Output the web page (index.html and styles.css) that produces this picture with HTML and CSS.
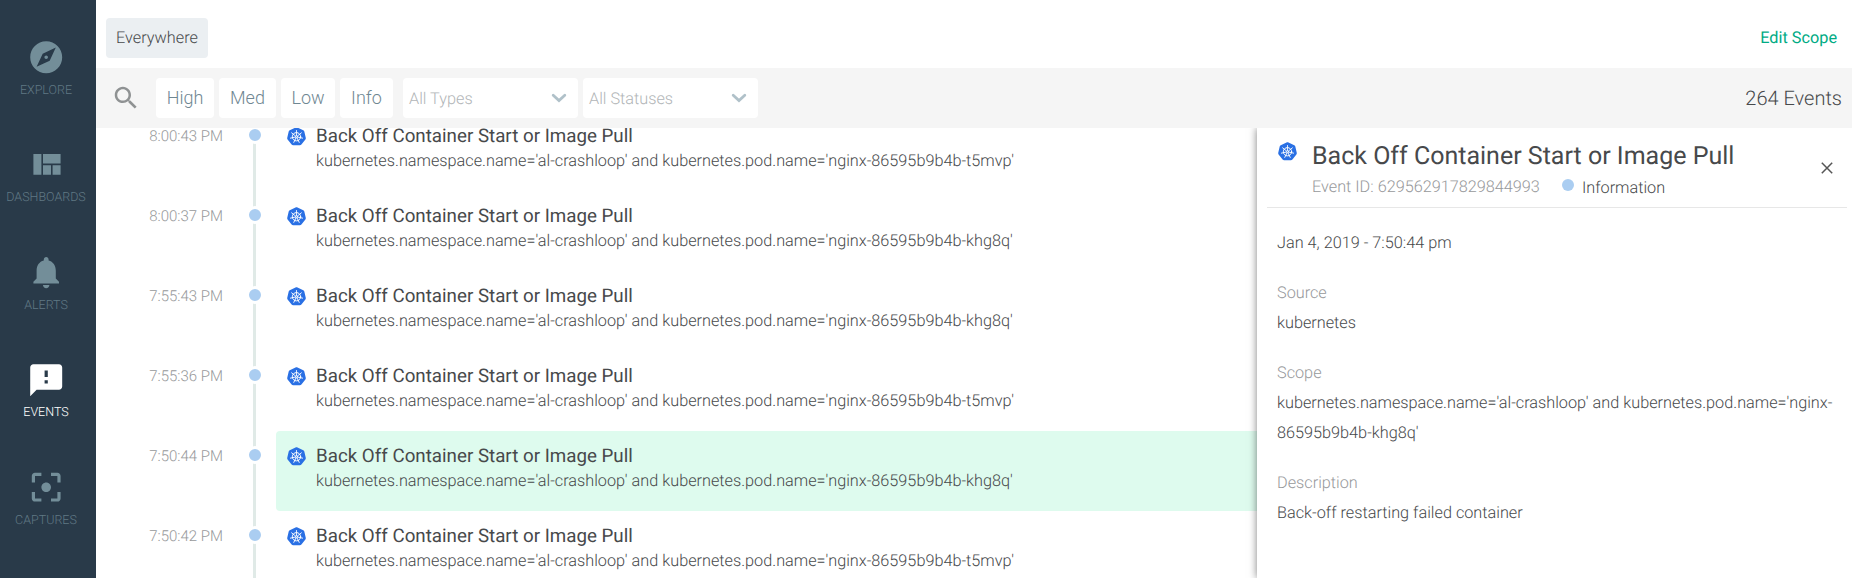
FILE: index.html
```html
<!DOCTYPE html>
<html lang="en">
<head>
<meta charset="utf-8">
<title>Events</title>
<link rel="stylesheet" href="styles.css">
</head>
<body>
<svg class="defs" width="0" height="0">
  <symbol id="k8s" viewBox="0 0 38 38">
    <path fill="#2a70e4" d="M19 .7c.8 0 1.4.1 2 .4l11.500 5.500c1.100.5 1.800 1.500 2.100 2.600l2.900 12.400c.3 1.200 0 2.400-.7 3.300l-8 10c-.8.9-1.900 1.500-3.100 1.500H12.300c-1.200 0-2.300-.6-3.100-1.500l-8-10c-.7-.9-1-2.100-.7-3.300L3.400 9.200c.3-1.100 1-2.100 2.100-2.600L17 1.100c.6-.3 1.200-.4 2-.4z"/>
    <g fill="none" stroke="#fff" stroke-linecap="round">
      <circle cx="19" cy="19.500" r="8.300" stroke-width="2"/>
      <g stroke-width="1.700">
        <path d="M19 17V7"/>
        <path d="M19 17V7" transform="rotate(51.430 19 19.500)"/>
        <path d="M19 17V7" transform="rotate(102.860 19 19.500)"/>
        <path d="M19 17V7" transform="rotate(154.290 19 19.500)"/>
        <path d="M19 17V7" transform="rotate(205.710 19 19.500)"/>
        <path d="M19 17V7" transform="rotate(257.140 19 19.500)"/>
        <path d="M19 17V7" transform="rotate(308.570 19 19.500)"/>
      </g>
      <circle cx="19" cy="19.500" r="2" stroke-width="1.500"/>
    </g>
  </symbol>
  <symbol id="chevron" viewBox="0 0 16 10"><path d="M2.200 2.200 8 7.500l5.800-5.300" fill="none" stroke="#b0c1c9" stroke-width="2.800" stroke-linecap="round"/></symbol>
</svg>
<div class="app">
  <nav class="sidebar">
    <a class="nav-item"><svg viewBox="0 0 24 24"><path d="M12 10.900c-.61 0-1.100.49-1.100 1.100s.49 1.100 1.100 1.100c.61 0 1.100-.49 1.100-1.100s-.49-1.100-1.100-1.100zM12 2C6.480 2 2 6.480 2 12s4.480 10 10 10 10-4.480 10-10S17.520 2 12 2zm2.190 12.190L6 18l3.810-8.190L18 6l-3.810 8.190z"/></svg><span>EXPLORE</span></a>
    <a class="nav-item"><svg viewBox="0 0 24 24"><path d="M10 18h5v-6h-5v6zm-6 0h5V5H4v13zm12 0h5v-6h-5v6zM10 5v6h11V5H10z"/></svg><span>DASHBOARDS</span></a>
    <a class="nav-item"><svg viewBox="0 0 24 24"><path d="M12 22c1.100 0 2-.9 2-2h-4c0 1.100.89 2 2 2zm6-6v-5c0-3.070-1.640-5.640-4.500-6.320V4c0-.83-.67-1.500-1.500-1.500s-1.500.67-1.500 1.500v.68C7.630 5.360 6 7.920 6 11v5l-2 2v1h16v-1l-2-2z"/></svg><span>ALERTS</span></a>
    <a class="nav-item active"><svg viewBox="0 0 24 24"><path d="M20 2H4c-1.100 0-1.990.9-1.990 2L2 22l4-4h14c1.100 0 2-.9 2-2V4c0-1.100-.9-2-2-2zm-7 12h-2v-2h2v2zm0-4h-2V6h2v4z"/></svg><span>EVENTS</span></a>
    <a class="nav-item"><svg viewBox="0 0 24 24"><path d="M12 9c-1.660 0-3 1.340-3 3s1.340 3 3 3 3-1.340 3-3-1.340-3-3-3zm-7 6H3v4c0 1.100.9 2 2 2h4v-2H5v-4zM5 5h4V3H5c-1.100 0-2 .9-2 2v4h2V5zm14-2h-4v2h4v4h2V5c0-1.100-.9-2-2-2zm0 16h-4v2h4c1.100 0 2-.9 2-2v-4h-2v4z"/></svg><span>CAPTURES</span></a>
  </nav>
  <div class="main">
    <header class="scope-bar">
      <span class="scope-chip">Everywhere</span>
      <a class="edit-scope">Edit Scope</a>
    </header>
    <div class="filter-bar">
      <svg class="search" viewBox="0 0 24 24"><path d="M15.500 14h-.79l-.28-.27C15.410 12.590 16 11.110 16 9.500 16 5.910 13.090 3 9.500 3S3 5.910 3 9.500 5.910 16 9.500 16c1.610 0 3.090-.59 4.230-1.570l.27.28v.79l5 4.990L20.490 19l-4.990-5zm-6 0C7.010 14 5 11.990 5 9.500S7.010 5 9.500 5 14 7.010 14 9.500 11.990 14 9.500 14z"/></svg>
      <div class="severities">
        <button class="w-high">High</button><button class="w-med">Med</button><button class="w-low">Low</button><button class="w-info">Info</button>
      </div>
      <div class="select"><span>All Types</span><svg><use href="#chevron"/></svg></div>
      <div class="select"><span>All Statuses</span><svg><use href="#chevron"/></svg></div>
      <div class="count">264 Events</div>
    </div>
    <div class="content">
      <div class="events">
        <div class="event"><time>8:00:43 PM</time><div class="track"><i></i></div><div class="card"><svg class="k8s"><use href="#k8s"/></svg><div><h3>Back Off Container Start or Image Pull</h3><p>kubernetes.namespace.name='al-crashloop' and kubernetes.pod.name='nginx-86595b9b4b-t5mvp'</p></div></div></div>
        <div class="event"><time>8:00:37 PM</time><div class="track"><i></i></div><div class="card"><svg class="k8s"><use href="#k8s"/></svg><div><h3>Back Off Container Start or Image Pull</h3><p>kubernetes.namespace.name='al-crashloop' and kubernetes.pod.name='nginx-86595b9b4b-khg8q'</p></div></div></div>
        <div class="event"><time>7:55:43 PM</time><div class="track"><i></i></div><div class="card"><svg class="k8s"><use href="#k8s"/></svg><div><h3>Back Off Container Start or Image Pull</h3><p>kubernetes.namespace.name='al-crashloop' and kubernetes.pod.name='nginx-86595b9b4b-khg8q'</p></div></div></div>
        <div class="event"><time>7:55:36 PM</time><div class="track"><i></i></div><div class="card"><svg class="k8s"><use href="#k8s"/></svg><div><h3>Back Off Container Start or Image Pull</h3><p>kubernetes.namespace.name='al-crashloop' and kubernetes.pod.name='nginx-86595b9b4b-t5mvp'</p></div></div></div>
        <div class="event selected"><time>7:50:44 PM</time><div class="track"><i></i></div><div class="card"><svg class="k8s"><use href="#k8s"/></svg><div><h3>Back Off Container Start or Image Pull</h3><p>kubernetes.namespace.name='al-crashloop' and kubernetes.pod.name='nginx-86595b9b4b-khg8q'</p></div></div></div>
        <div class="event"><time>7:50:42 PM</time><div class="track"><i></i></div><div class="card"><svg class="k8s"><use href="#k8s"/></svg><div><h3>Back Off Container Start or Image Pull</h3><p>kubernetes.namespace.name='al-crashloop' and kubernetes.pod.name='nginx-86595b9b4b-t5mvp'</p></div></div></div>
      </div>
      <aside class="detail">
        <div class="detail-head">
          <svg class="k8s"><use href="#k8s"/></svg>
          <div class="detail-title">
            <h2>Back Off Container Start or Image Pull</h2>
            <div class="meta"><span class="event-id">Event ID: 629562917829844993</span><i></i><span class="level">Information</span></div>
          </div>
          <svg class="close" viewBox="0 0 12 12"><path d="M.8.8l10.400 10.400M11.200.8.8 11.200"/></svg>
        </div>
        <div class="detail-body">
          <p>Jan 4, 2019 - 7:50:44 pm</p>
          <dl><dt>Source</dt><dd>kubernetes</dd></dl>
          <dl><dt>Scope</dt><dd>kubernetes.namespace.name='al-crashloop' and kubernetes.pod.name='nginx-86595b9b4b-khg8q'</dd></dl>
          <dl><dt>Description</dt><dd>Back-off restarting failed container</dd></dl>
        </div>
      </aside>
    </div>
  </div>
</div>
</body>
</html>
```
FILE: styles.css
```css
* { box-sizing: border-box; margin: 0; padding: 0; }
body { font-family: Roboto, "Open Sans", sans-serif; font-weight: 300; font-size: 16.25px; text-rendering: geometricPrecision; color: #47494b; background: #fff; overflow: hidden; }
.defs { display: block; }
.app { display: flex; height: 578px; }

.sidebar { width: 96px; flex: none; background: #293a49; padding: 38px 4px 0 0; display: flex; flex-direction: column; }
.nav-item { height: 107.5px; flex: none; display: flex; flex-direction: column; align-items: center; gap: 6.5px; color: #607884; font-size: 12.5px; line-height: 16px; }
.nav-item svg { width: 38.4px; height: 38.4px; flex: none; fill: #738e99; }
.nav-item.active { color: #fff; }
.nav-item.active svg { fill: #fff; }

.main { flex: 1; min-width: 0; display: flex; flex-direction: column; }
.scope-bar { height: 68px; flex: none; display: flex; align-items: center; justify-content: space-between; padding: 8px 14px 0 10px; }
.scope-chip { height: 40px; width: 102px; text-align: center; line-height: 39px; background: #ebeff2; border-radius: 4px; }
.edit-scope { color: #00ab84; font-weight: 400; line-height: 38px; padding: 0 1px 1px 0; }

.filter-bar { height: 60px; flex: none; background: #f5f5f5; display: flex; align-items: center; padding: 0 10px 0 15px; }
.search { width: 30px; height: 30px; fill: #8f9293; margin-right: 15px; }
.severities { display: flex; gap: 5px; margin-right: 10px; }
.severities button { height: 40px; border: 0; border-radius: 4px; background: #fff; font: 300 18px/40px Roboto, sans-serif; color: #6f8792; }
.w-high { width: 58px; }
.w-med { width: 57px; }
.w-low { width: 54px; }
.w-info { width: 53px; }
.select { width: 175px; height: 40px; margin-right: 5px; padding: 0 11px 0 6px; border-radius: 4px; background: #fff; color: #b1b5b7; display: flex; align-items: center; justify-content: space-between; }
.select svg { width: 16px; height: 10px; }
.count { margin-left: auto; font-size: 20px; }

.content { flex: 1; min-height: 0; display: flex; overflow: hidden; }
.events { flex: 1; min-width: 0; margin-top: -17px; }
.event { height: 80px; display: flex; }
.event time { width: 128px; text-align: right; font-size: 15px; line-height: 20px; padding: 15px 1px 0 0; color: #97999b; }
.track { width: 52px; display: flex; justify-content: center; background: linear-gradient(#e0eae7, #e0eae7) 29px 0 / 3px 100% no-repeat; padding: 15px 0 0 10px; }
.track i { width: 18px; height: 18px; border-radius: 50%; background: #aacdf1; border: 3px solid #fff; }
.card { flex: 1; display: flex; gap: 10.5px; padding: 15px 0 0 10.5px; border-radius: 4px 0 0 4px; }
.selected .card { background: #defbee; }
.k8s { width: 19px; height: 19px; flex: none; }
.card .k8s { margin-top: .5px; }
.card h3 { font-size: 18.75px; line-height: 21px; font-weight: 400; }
.card p { line-height: 20px; margin-top: 4px; }

.detail { width: 595px; flex: none; background: #fff; box-shadow: 0 0 8px rgba(0, 0, 0, .5); padding: 0 5px 0 10px; position: relative; }
.detail-head { height: 80px; border-bottom: 1px solid #e7e7e7; display: flex; padding: 14px 14px 0 10px; }
.detail-head .k8s { margin: -.5px 15.5px 0 .5px; }
.detail-title { flex: 1; padding-top: 1px; }
.detail-title h2 { font-size: 25px; line-height: 28px; font-weight: 400; }
.meta { display: flex; line-height: 20px; margin-top: 6px; }
.event-id { color: #97999b; }
.meta i { width: 12px; height: 12px; border-radius: 50%; background: #aacdf1; margin: 2px 8px 0 22px; }
.level { padding-top: 1px; }
.close { width: 12px; height: 12px; margin-top: 20px; fill: none; stroke: #555; stroke-width: 1.500; }
.detail-body { padding: 20px 10px; line-height: 30px; }
.detail-body dl { margin-top: 20px; }
.detail-body dt { color: #97999b; }
```
